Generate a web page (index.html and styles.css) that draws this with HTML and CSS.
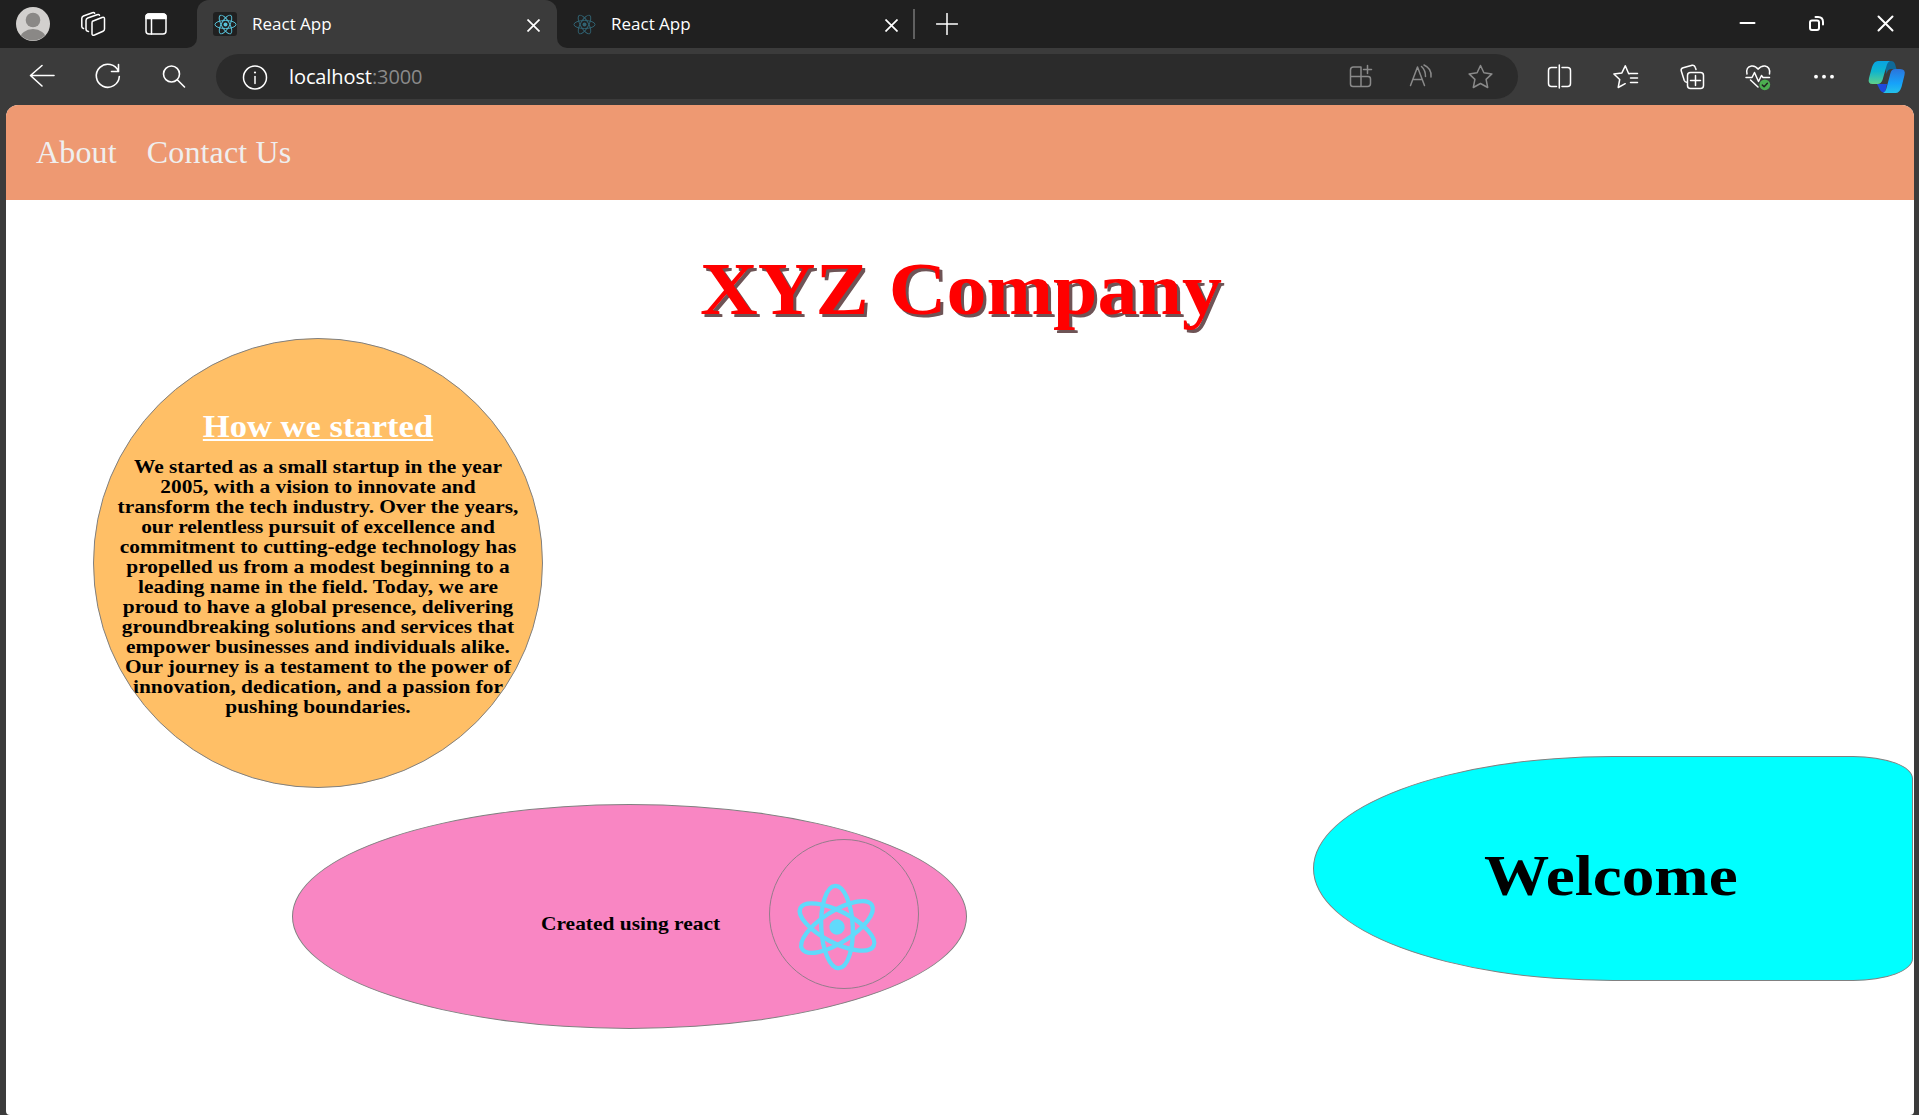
FILE: index.html
```html
<!DOCTYPE html>
<html lang="en">
<head>
<meta charset="utf-8">
<title>React App</title>
<link rel="stylesheet" href="styles.css">
</head>
<body>
<svg class="defs" width="0" height="0" aria-hidden="true">
  <symbol id="atom" viewBox="-12 -12 24 24" overflow="visible">
    <circle r="2.05" fill="currentColor"/>
    <g fill="none" stroke="currentColor">
      <ellipse rx="11" ry="4.2"/>
      <ellipse rx="11" ry="4.2" transform="rotate(60)"/>
      <ellipse rx="11" ry="4.2" transform="rotate(120)"/>
    </g>
  </symbol>
</svg>

<header class="titlebar">
  <div class="title-left">
    <svg width="197" height="48" viewBox="0 0 197 48" class="line">
      <clipPath id="face"><circle cx="33" cy="24" r="16.5"/></clipPath>
      <circle cx="33" cy="24" r="17" fill="#d2d0ce" stroke="none"/>
      <g clip-path="url(#face)" fill="#8a8886" stroke="none"><circle cx="33" cy="20" r="7.3"/><ellipse cx="33" cy="39" rx="13" ry="10"/></g>
      <path d="M92.500 21.200 l9.500-3.700 q2.500-.8 2.500 1.300 v10.200 q0 1.500-1.500 2.200 l-8.500 3.800 q-2.500 1-2.500-1.300 v-10.500 q0-1.400 .5-2z"/>
      <path d="M88.500 31.500 q-2.500-.4-2.500-2.500 v-8.500 q0-1.800 1.700-2.500 l9.300-3.300 q2-.6 2.500.6"/>
      <path d="M83.500 28.500 q-1.700-.5-1.700-2 v-8.300 q0-1.500 1.600-2.200 l9-3.300 q1.600-.5 2.300.5"/>
      <rect x="146" y="14" width="20" height="20" rx="3"/>
      <path d="M146 18.500v-1.500q0-3 3-3h14q3 0 3 3v1.500z" fill="#fff"/><path d="M151.500 19v15"/>
    </svg>
  </div>
  <div class="tab-wrap">
    <div class="tab active">
      <span class="favicon boxed"><svg width="23" height="23"><use href="#atom"/></svg></span>
      <span class="tab-name">React App</span>
      <svg class="x" width="13" height="13" viewBox="0 0 13 13"><path d="M.5.500l12 12M12.500.500l-12 12"/></svg>
    </div>
  </div>
  <div class="title-rest">
    <div class="tab other">
      <span class="favicon dim"><svg width="23" height="23"><use href="#atom"/></svg></span>
      <span class="tab-name">React App</span>
      <svg class="x" width="13" height="13" viewBox="0 0 13 13"><path d="M.5.500l12 12M12.500.500l-12 12"/></svg>
    </div>
    <span class="divider"></span>
    <svg class="plus line" width="22" height="22" viewBox="0 0 22 22"><path d="M11 .5v21M.500 11h21"/></svg>
    <svg class="controls line" width="207" height="48" viewBox="1713 0 207 48">
      <path d="M1740.500 23h14" stroke-width="2"/>
      <rect x="1810" y="20.500" width="9" height="9.500" rx="2" stroke-width="2"/>
      <path d="M1815.500 17h2.500q5 0 5 5v2.500" stroke-width="2"/>
      <path d="M1878.500 16.500l14 14M1892.500 16.500l-14 14" stroke-width="2"/>
    </svg>
  </div>
</header>

<nav class="toolbar">
  <svg class="line" width="207" height="57" viewBox="9 48 207 57">
    <path d="M31 75.500h23M42 65.500l-11.500 10l11.500 10.500" stroke-width="1.600"/>
    <path d="M118.500 71.500a11.500 11.500 0 1 0 .8 5M118.500 64.500v7h-7" stroke-width="1.600"/>
    <circle cx="171.500" cy="74" r="8" stroke-width="1.600"/><path d="M177.500 80l7 7" stroke-width="1.600"/>
  </svg>
  <div class="address">
    <svg class="line" width="26" height="26" viewBox="242 63 26 26"><circle cx="255" cy="76.500" r="11.500"/><path d="M255 75.500v7"/><circle cx="255" cy="71.500" r="1.100" fill="#fff" stroke="none"/></svg>
    <span class="url">localhost<span class="port">:3000</span></span>
    <svg class="line grey" width="180" height="45" viewBox="1331 54 180 45">
      <path d="M1361 67h-7.500q-3 0-3 3v14q0 2.500 2.500 2.500h14.500q3 0 3-3v-4.500q0-2.500-2.500-2.500h-17.500M1361 67v19.500M1367.500 65.500v8M1363.500 69.500h8"/>
      <path d="M1410.500 85.500l7-18.500l7 18.500M1413 79.500h9M1421.500 66.500q4 3.500 4 10M1424 65q8 3.500 7 12"/>
      <path d="M1480.500 65.500l3.400 7.300l8 1.100l-5.800 5.500l1.600 8.100l-7.200-4l-7.200 4l1.600-8.100l-5.800-5.500l8-1.100z"/>
    </svg>
  </div>
  <svg class="line" width="401" height="57" viewBox="1518 48 401 57">
    <defs>
      <linearGradient id="cp1" x1="0" y1="0" x2="0" y2="1"><stop offset="0" stop-color="#08a3e2"/><stop offset=".45" stop-color="#0fb5ce"/><stop offset="1" stop-color="#5fd08a"/></linearGradient>
      <linearGradient id="cp2" x1="0" y1="0" x2="0" y2="1"><stop offset="0" stop-color="#2b74dc"/><stop offset=".6" stop-color="#16a2fa"/><stop offset="1" stop-color="#24c1ea"/></linearGradient>
    </defs>
    <path d="M1556.500 67.500h-5q-3 0-3 3v13q0 3 3 3h5M1562 67.500h5.500q3 0 3 3v13q0 3-3 3h-5.500M1559.300 65v23"/>
    <path d="M1629.500 73.800h-.8l-3.400-8.100l-3.400 7.200l-8 1.100l5.800 5.500l-1.500 8l7-3.800M1629 73.500h8.500M1630.500 78h7M1630.500 82.500h7"/>
    <rect x="1687.500" y="72.500" width="16" height="16" rx="3"/>
    <path d="M1695.500 75.500v10M1690.500 80.500h10M1696 69.500l-.8-2.200q-.7-2.500-3-2l-9 2.500q-2.500.8-2 3l3 9.500q.8 2 2.500 2"/>
    <path d="M1747 74q-1.500-7 4.500-8q4-.5 6.500 3.200q3-3.700 7-3.200q5.500 1 4.500 8M1746 77.500h6l2.500-5l4 9l3-6l1.500 2h6.500M1750.500 80l7.500 7"/>
    <circle cx="1764.800" cy="84.800" r="5.400" fill="#4caf50" stroke="none"/><path d="M1762.300 85l1.800 1.800l3.300-3.600" stroke="#222"/>
    <g fill="#fff" stroke="none"><circle cx="1816" cy="76.700" r="1.900"/><circle cx="1824" cy="76.700" r="1.900"/><circle cx="1832" cy="76.700" r="1.900"/></g>
    <g stroke="none">
      <path d="M1884 61h7q3 0 4 3l1.500 5h-5q-4 0-5 5z" fill="#0f6a99"/>
      <path d="M1877 84h10l-2 9q-4-.5-5.500-4z" fill="#1d49dc"/>
      <path d="M1878 61h12q-2.500 1-3.500 5l-4 14q-1.500 4-5 4h-5q-5 0-3.500-6l3-11q2-6 6-6z" fill="url(#cp1)"/>
      <path d="M1895 69h5q6 0 4.500 6l-3 12q-2 6-6 6h-12.500q2.500-1 3.500-5l4-15q1-4 4.500-4z" fill="url(#cp2)"/>
    </g>
  </svg>
</nav>

<div class="viewport">
  <nav class="site-nav"><a>About</a><a>Contact Us</a></nav>
  <h1 class="company">XYZ Company</h1>
  <main class="shapes">
    <div class="left">
      <section class="story">
        <h2>How we started</h2>
        <p>We started as a small startup in the year<br>2005, with a vision to innovate and<br>transform the tech industry. Over the years,<br>our relentless pursuit of excellence and<br>commitment to cutting-edge technology has<br>propelled us from a modest beginning to a<br>leading name in the field. Today, we are<br>proud to have a global presence, delivering<br>groundbreaking solutions and services that<br>empower businesses and individuals alike.<br>Our journey is a testament to the power of<br>innovation, dedication, and a passion for<br>pushing boundaries.</p>
      </section>
      <section class="made-with">
        <h3>Created using react</h3>
        <div class="logo"><svg width="90" height="90"><use href="#atom" stroke-width="1.15"/></svg></div>
      </section>
    </div>
    <section class="welcome"><h2>Welcome</h2></section>
  </main>
</div>
</body>
</html>
```

FILE: styles.css
```css
* { box-sizing: border-box; }
body {
  margin: 0;
  width: 1919px;
  height: 1115px;
  overflow: hidden;
  display: flex;
  flex-direction: column;
  background: #3b3b3b;
  font-family: "Open Sans", sans-serif;
  color: #fff;
}
h1, h2, h3, p { margin: 0; }
svg { display: block; flex: none; }
.defs { position: absolute; }
.line { fill: none; stroke: #fff; stroke-width: 1.5; stroke-linecap: round; stroke-linejoin: round; }
.grey { stroke: #8a8a8a; }

/* window title bar */
.titlebar { display: flex; height: 48px; flex: none; }
.title-left { width: 197px; background: #202020; border-bottom-right-radius: 10px; }
.tab-wrap { width: 360px; background: linear-gradient(#202020 24px, #3b3b3b 24px); }
.title-rest { flex: 1; display: flex; align-items: center; background: #202020; border-bottom-left-radius: 10px; }
.tab { display: flex; align-items: center; height: 48px; font-size: 17px; }
.active { background: #3b3b3b; border-radius: 12px 12px 0 0; padding: 0 17px 0 16px; }
.other { width: 341px; padding-left: 15px; }
.tab-name { flex: 1; padding-left: 15px; line-height: 24px; }
.favicon { width: 24px; height: 24px; display: flex; align-items: center; justify-content: center; color: #58c4dc; }
.boxed { background: #202020; border-radius: 3px; }
.dim { color: #316373; }
.x { stroke: #fff; stroke-width: 1.7; margin-top: 2px; }
.divider { width: 2px; height: 30px; margin-left: 15px; background: #606060; }
.plus { margin-left: 21px; margin-top: -1px; }
.controls { margin-left: auto; margin-right: -1px; }

/* browser toolbar */
.toolbar { display: flex; height: 57px; flex: none; align-items: center; padding-left: 9px; }
.address { width: 1302px; height: 45px; border-radius: 23px; background: #2b2b2b; display: flex; align-items: center; padding: 0 7px 0 26px; }
.url { flex: 1; padding-left: 21px; font-size: 20px; letter-spacing: -.1px; line-height: 28px; }
.port { color: #8a8a8a; }

/* page */
.viewport {
  flex: 1;
  margin: 0 5px 0 6px;
  border-radius: 12px 12px 4px 4px;
  overflow: hidden;
  background: #fff;
  color: #000;
  font-family: "Liberation Serif", serif;
}
.site-nav { height: 95px; background: #ee9972; padding: 28px 30px 0; display: flex; gap: 30px; font-size: 32px; line-height: 38px; letter-spacing: .15px; color: #efefef; }
.company {
  margin-top: 47px;
  height: 91px;
  line-height: 84px;
  text-align: center;
  font-size: 74px;
  transform: translateX(1px) scaleX(1.08);
  color: #f00;
  text-shadow: 2.800px 3px 0 #6e5456;
}
.shapes { display: flex; justify-content: space-between; padding: 0 1px 0 87px; }
.story {
  width: 450px;
  height: 450px;
  border: 1px solid #808080;
  border-radius: 50%;
  background: #ffbf66;
  overflow: hidden;
  padding-top: 68px;
  text-align: center;
}
.story h2 { font-size: 32px; line-height: 38px; transform: scaleX(1.08); color: #fff; text-decoration: underline; text-decoration-thickness: 2px; text-underline-offset: 2px; text-decoration-skip-ink: none; }
.story p { margin-top: 12px; font-size: 19.5px; line-height: 20px; font-weight: bold; transform: scaleX(1.096); white-space: nowrap; }
.made-with {
  width: 675px;
  height: 225px;
  margin: 16px 0 0 199px;
  border: 1px solid #808080;
  border-radius: 50%;
  background: #f986c3;
  display: flex;
  align-items: center;
}
.made-with h3 { margin-left: 248px; width: 228px; padding-top: 14px; font-size: 19.5px; line-height: 24px; transform: scaleX(1.1); transform-origin: left; white-space: nowrap; }
.logo { width: 150px; height: 150px; margin-top: -6px; border: 1.500px solid #957c8b; border-radius: 50%; color: #61dafb; padding: 42px 0 0 22px; }
.logo svg { transform: rotate(27.5deg); }
.welcome {
  width: 600px;
  height: 225px;
  margin-top: 418px;
  border: 1px solid #808080;
  border-radius: 50% 10% 10% 50%;
  background: #0ff;
  padding: 87px 0 0 170px;
}
.welcome h2 { font-size: 57px; line-height: 64px; transform: scaleX(1.145); transform-origin: left; }
```
